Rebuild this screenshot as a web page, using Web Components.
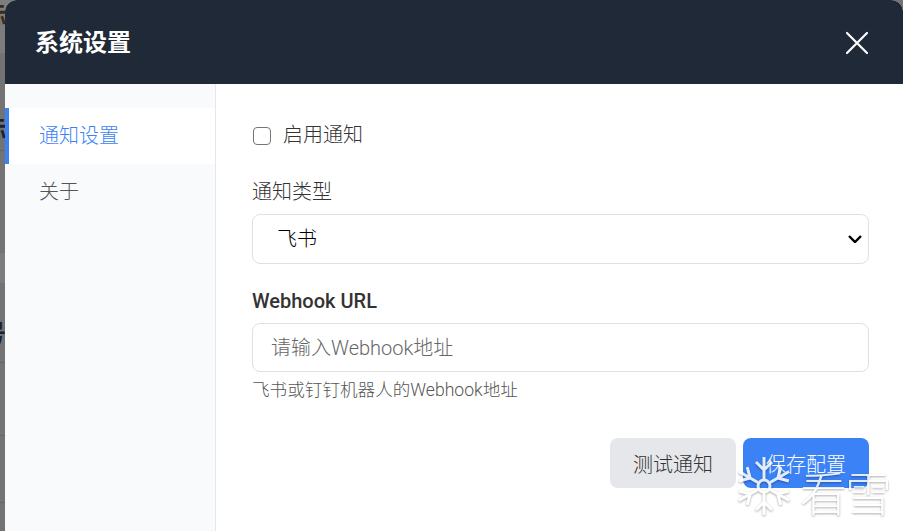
<!DOCTYPE html>
<html lang="zh"><head><meta charset="utf-8">
<style>
html,body{margin:0;height:100%;overflow:hidden}
body{font-family:Roboto,"Noto Sans CJK SC",sans-serif;background:#737373}
</style></head><body>
<page-behind></page-behind>
<settings-dialog></settings-dialog>
<snow-mark></snow-mark>
<script>
const F='Roboto,"Noto Sans CJK SC",sans-serif';
customElements.define('page-behind',class extends HTMLElement{constructor(){super();this.attachShadow({mode:'open'}).innerHTML=`
<style>
:host{position:absolute;left:0;top:0;width:14px;height:531px;overflow:hidden;font:700 24px/1 "Noto Sans CJK SC",sans-serif;color:#1a2230}
i{position:absolute;left:0;width:100%;height:1px;background:#666}
b{position:absolute;left:-18px;font-weight:700}
.band{position:absolute;left:0;width:100%;background:#7d7d7d}
</style>
<div class="band" style="top:0;height:53px"></div>
<div class="band" style="top:253px;height:30px"></div>
<i style="top:150px"></i><i style="top:362px"></i><i style="top:435px"></i><i style="top:502px"></i>
<b style="top:2px;color:#3a2c14">标</b><b style="top:116px">标</b><b style="top:320px">号</b>
<b style="top:462px;left:-8px;font-size:11px">1</b>`}});
customElements.define('settings-dialog',class extends HTMLElement{constructor(){super();this.attachShadow({mode:'open'}).innerHTML=`
<style>
:host{position:relative;display:flex;flex-direction:column;height:531px;margin-left:5px;background:#fff;border-radius:12px 12px 0 0;overflow:hidden;font-family:${F};font-weight:300;color:#333}
header{height:84px;flex:none;background:#1f2937;display:flex;align-items:center;justify-content:space-between;padding:2px 34px 0 30px;box-sizing:border-box}
h1{margin:0;font-size:24px;font-weight:700;color:#fff;line-height:1}
.x{width:24px;height:24px;display:block}
.body{flex:1;display:flex;min-height:0}
nav{width:210px;flex:none;background:#f9fafb;border-right:1px solid #e5e7eb;padding-top:24px}
.item{height:56px;display:flex;align-items:center;padding-left:34px;font-size:20px;line-height:28px;color:#555}
.item.on{background:#fff;color:#3b82f6;border-left:4px solid #3b82f6;padding-left:30px}
main{flex:1;padding:36px 34px 0 36px;min-width:0}
.check{display:flex;align-items:center;height:30px;font-size:20px;line-height:28px}
input[type=checkbox]{appearance:none;width:18px;height:18px;margin:2px 12px 0 1px;border:1.5px solid #767676;border-radius:4px;background:#fff}
label.f{display:block;font-size:20px;line-height:28px}
.wrap{position:relative;margin-top:8px}
.wrap svg{position:absolute;right:7px;top:21px;width:14px;height:8px}
select,input[type=text]{display:block;box-sizing:border-box;width:100%;background:#fff;border:1px solid #e0e0e0;border-radius:8px;font-family:inherit;font-weight:300;font-size:20px;outline:none}
select{appearance:none;height:50px;padding:0 24px;color:#000}
input[type=text]{height:49px;margin-top:8px;padding:0 18px;color:#333}
input::placeholder{color:#666}
.hint{font-size:17.6px;line-height:24px;color:#555;margin-top:6px}
.btns{display:flex;justify-content:flex-end;gap:7px;margin-top:36px}
button{width:126px;height:50px;border:0;border-radius:8px;font-family:inherit;font-weight:300;font-size:20px;padding:0}
.a{background:#e5e7eb;color:#333}.b{background:#3b82f6;color:#fff}
</style>
<header><h1>系统设置</h1><svg class="x" viewBox="0 0 24 24" fill="none" stroke="#fff" stroke-width="2.2" stroke-linecap="round"><path d="M2 2 22 22M22 2 2 22"/></svg></header>
<div class="body"><nav><div class="item on">通知设置</div><div class="item">关于</div></nav>
<main>
<label class="check"><input type="checkbox">启用通知</label>
<div style="margin-top:28px"><label class="f">通知类型</label><div class="wrap"><select><option>飞书</option></select><svg viewBox="0 0 14 8" fill="none" stroke="#000" stroke-width="2.4"><path d="M1 1 7 7 13 1"/></svg></div></div>
<div style="margin-top:23px"><label class="f" style="font-weight:500">Webhook URL</label><input type="text" placeholder="请输入Webhook地址"><div class="hint">飞书或钉钉机器人的Webhook地址</div></div>
<div class="btns"><button class="a">测试通知</button><button class="b">保存配置</button></div>
</main></div>`}});
customElements.define('snow-mark',class extends HTMLElement{constructor(){super();
const arm='<path d="M30 23V1M30 14 22 6M30 14 38 6"/>';
let s='';for(const a of [0,60,120,180,240,300])s+=`<g transform="rotate(${a} 30 30)">${arm}</g>`;
this.attachShadow({mode:'open'}).innerHTML=`
<style>
:host{position:absolute;left:734px;top:455px;display:flex;align-items:center;gap:2px;filter:drop-shadow(0 1px 1px rgba(0,0,0,.4));opacity:.85}
svg{width:60px;height:60px;margin-bottom:1px}
span{font:200 47px/52px "Noto Sans CJK SC",sans-serif;color:#fff;letter-spacing:-2px;margin:10px 0 0 4px}
</style><svg viewBox="0 0 60 60" fill="none" stroke="#fff" stroke-width="3">${s}<circle cx="30" cy="30" r="6"/></svg><span>看雪</span>`}});
</script></body></html>
